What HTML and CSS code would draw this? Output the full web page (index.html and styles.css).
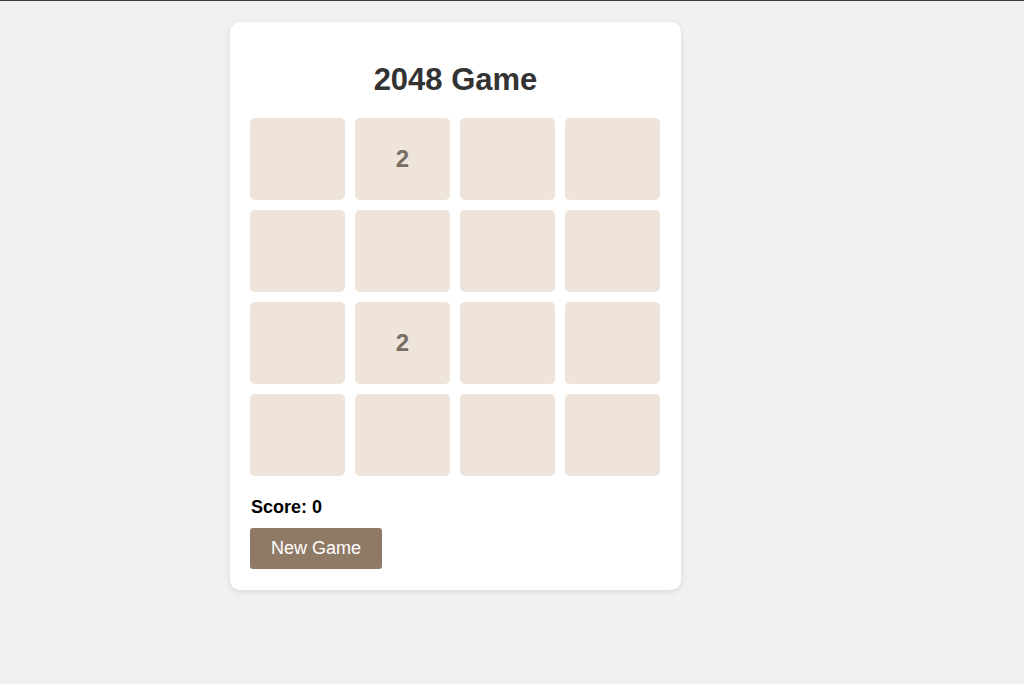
FILE: index.html
```html
<!DOCTYPE html>
<html lang="en">
<head>
  <meta charset="UTF-8" />
  <meta name="viewport" content="width=device-width, initial-scale=1.0" />
  <title>2048 Game</title>
  <link rel="stylesheet" href="styles.css">
</head>
<body>
  <div class="game">
    <h1>2048 Game</h1>
    <div class="grid" id="grid">
      <div class="tile"></div>
      <div class="tile">2</div>
      <div class="tile"></div>
      <div class="tile"></div>
      <div class="tile"></div>
      <div class="tile"></div>
      <div class="tile"></div>
      <div class="tile"></div>
      <div class="tile"></div>
      <div class="tile">2</div>
      <div class="tile"></div>
      <div class="tile"></div>
      <div class="tile"></div>
      <div class="tile"></div>
      <div class="tile"></div>
      <div class="tile"></div>
    </div>
    <div class="score">Score: <span id="score">0</span></div>
    <button id="newGame">New Game</button>
  </div>
</body>
</html>
```

FILE: styles.css
```css
body {
  margin: 0;
  padding: 22px 0 0 230px;
  font-family: 'Liberation Sans', Arial, sans-serif;
  background: #f1f1f1;
  border-top: 1px solid #3c3c3c;
  min-height: 661px;
}
.game {
  width: 411px;
  background: white;
  padding: 20px 20px 21px;
  border-radius: 10px;
  box-shadow: 0 2px 6px rgba(0, 0, 0, 0.1);
  margin-top: -1px;
}
h1 {
  text-align: center;
  color: #333;
  font-size: 31px;
  margin: 20px 0 20px;
  line-height: 36px;
}
.grid {
  display: grid;
  grid-template-columns: repeat(4, 95px);
  grid-auto-rows: 82px;
  gap: 10px;
}
.tile {
  background: #eee4da;
  border-radius: 5px;
  display: flex;
  align-items: center;
  justify-content: center;
  font-size: 24px;
  font-weight: bold;
  color: #776e65;
}
.score {
  margin-top: 21px;
  padding-left: 1px;
  font-size: 18px;
  font-weight: bold;
  line-height: 21px;
  color: #000;
}
button {
  margin-top: 10px;
  background-color: #8f7a66;
  color: white;
  font-family: inherit;
  font-size: 18px;
  line-height: 21px;
  padding: 10px 21px;
  border: none;
  border-radius: 3px;
  cursor: pointer;
  display: block;
}
```
